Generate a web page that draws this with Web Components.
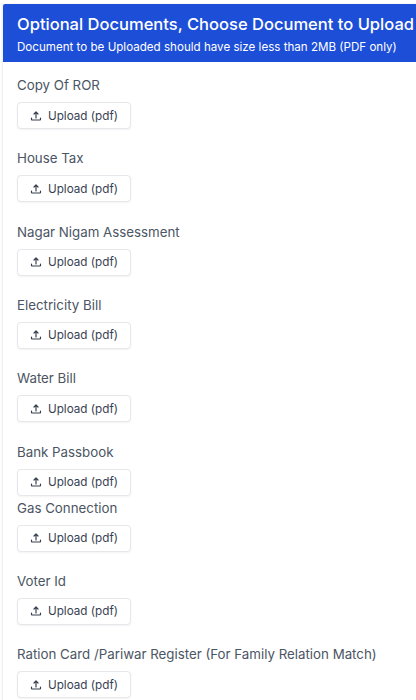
<!DOCTYPE html>
<html>
<head>
<meta charset="utf-8">
<title>Optional Documents</title>
<style>
  html, body { margin: 0; padding: 0; background: #fff; overflow: hidden; }
  body { font-family: Inter, "Liberation Sans", sans-serif; height: 700px; }
</style>
</head>
<body>
<doc-panel heading="Optional Documents, Choose Document to Upload" note="Document to be Uploaded should have size less than 2MB (PDF only)">
  <doc-field label="Copy Of ROR"></doc-field>
  <doc-field label="House Tax"></doc-field>
  <doc-field label="Nagar Nigam Assessment"></doc-field>
  <doc-field label="Electricity Bill"></doc-field>
  <doc-field label="Water Bill"></doc-field>
  <doc-field label="Bank Passbook" tight></doc-field>
  <doc-field label="Gas Connection"></doc-field>
  <doc-field label="Voter Id"></doc-field>
  <doc-field label="Ration Card /Pariwar Register (For Family Relation Match)"></doc-field>
</doc-panel>

<script>
"use strict";

(() => {
  customElements.define("upload-button", class extends HTMLElement {
    constructor() {
      super();

      this.attachShadow({mode: "open"}).innerHTML = `
        <style>
          :host {
            display: inline-flex;
            align-items: center;
            box-sizing: border-box;
            height: 27px;
            width: 114px;
            padding-left: 12px;
            gap: 6px;
            color: #374151;
            background: #fff;
            border: 1px solid #e5e7eb;
            border-radius: 4px;
            box-shadow: 0 1px 2px rgba(0, 0, 0, 0.05);
            font-size: 11.7px;
            white-space: nowrap;
          }

          svg {
            width: 12px;
            height: 12px;
            flex: none;
          }
        </style>
        <svg viewBox="0 0 24 24" fill="none" stroke="currentColor" stroke-width="2.4" stroke-linecap="round" stroke-linejoin="round">
          <path d="M12 16V4M8 8l4-4 4 4M3 16v3a1 1 0 0 0 1 1h16a1 1 0 0 0 1-1v-3"/>
        </svg>
        <span><slot></slot></span>
      `;
    }
  });

  customElements.define("doc-field", class extends HTMLElement {
    constructor() {
      super();

      this.attachShadow({mode: "open"}).innerHTML = `
        <style>
          :host {
            display: block;
            height: 73.33px;
          }

          :host([tight]) {
            height: 56px;
          }

          label {
            display: block;
            height: 20px;
            line-height: 20px;
            margin-bottom: 7px;
            color: #4b5563;
            font-size: 13.3px;
            white-space: nowrap;
          }
        </style>
        <label></label>
        <upload-button>Upload (pdf)</upload-button>
      `;

      this.shadowRoot.querySelector("label").textContent = this.getAttribute("label");
    }
  });

  customElements.define("doc-panel", class extends HTMLElement {
    constructor() {
      super();

      this.attachShadow({mode: "open"}).innerHTML = `
        <style>
          :host {
            display: block;
            margin: 4px 0 0 3px;
            box-shadow: -1px 0 2px rgba(0, 0, 0, 0.08);
          }

          header {
            box-sizing: border-box;
            height: 58px;
            padding: 7px 0 0 14px;
            color: #fff;
            background: #1d4ed8;
            border-top-left-radius: 2px;
            white-space: nowrap;
          }

          h2 {
            margin: 0;
            font-size: 16.55px;
            line-height: 26px;
            font-weight: 500;
          }

          p {
            margin: 1px 0 0;
            font-size: 11.6px;
            line-height: 18px;
          }

          section {
            padding: 13px 0 0 14px;
          }
        </style>
        <header>
          <h2></h2>
          <p></p>
        </header>
        <section><slot></slot></section>
      `;

      this.shadowRoot.querySelector("h2").textContent = this.getAttribute("heading");
      this.shadowRoot.querySelector("p").textContent = this.getAttribute("note");
    }
  });
})();
</script>
</body>
</html>
